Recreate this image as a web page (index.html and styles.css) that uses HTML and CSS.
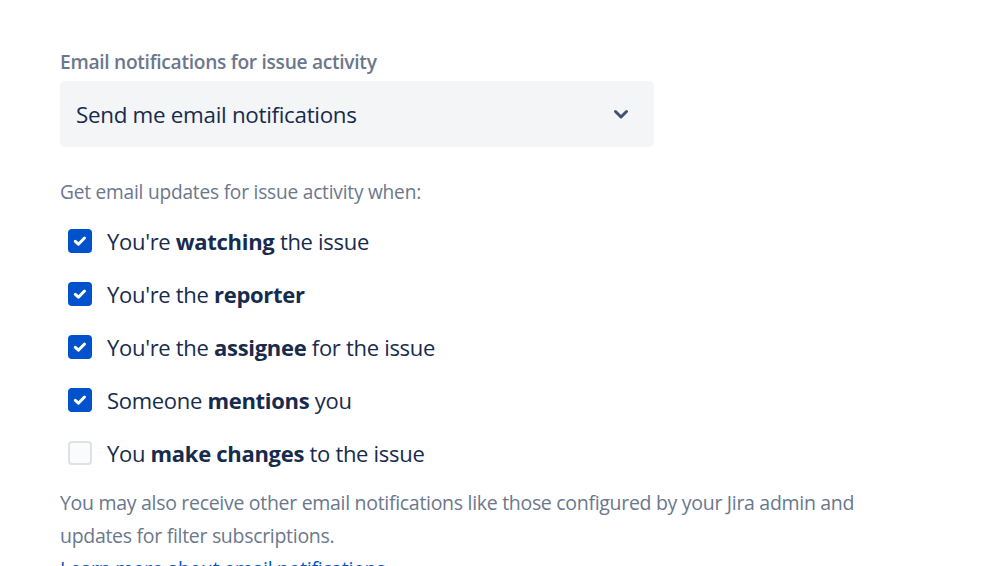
FILE: index.html
```html
<!DOCTYPE html>
<html>
<head>
<meta charset="utf-8">
<link rel="stylesheet" href="styles.css">
</head>
<body>
<div class="page">
  <p class="intro">Manage your notifications on this page by using the settings and toggles below. Change settings</p>
  <div class="field">
    <label class="label">Email notifications for issue activity</label>
    <div class="select">
      <span class="select-value">Send me email notifications</span>
      <svg class="chevron" width="24" height="24" viewBox="0 0 24 24"><path d="M6.5 9.5l5.5 5.5 5.5-5.5" fill="none" stroke="#42526E" stroke-width="3" stroke-linecap="round" stroke-linejoin="round"/></svg>
    </div>
  </div>
  <p class="hint">Get email updates for issue activity when:</p>
  <ul class="options">
    <li class="option"><span class="box checked"><svg width="24" height="24" viewBox="0 0 24 24"><path d="M7.3 12.3l3.1 2.9 6.1-6.2" fill="none" stroke="#fff" stroke-width="3" stroke-linecap="round" stroke-linejoin="round"/></svg></span><span>You're <b>watching</b> the issue</span></li>
    <li class="option"><span class="box checked"><svg width="24" height="24" viewBox="0 0 24 24"><path d="M7.3 12.3l3.1 2.9 6.1-6.2" fill="none" stroke="#fff" stroke-width="3" stroke-linecap="round" stroke-linejoin="round"/></svg></span><span>You're the <b>reporter</b></span></li>
    <li class="option"><span class="box checked"><svg width="24" height="24" viewBox="0 0 24 24"><path d="M7.3 12.3l3.1 2.9 6.1-6.2" fill="none" stroke="#fff" stroke-width="3" stroke-linecap="round" stroke-linejoin="round"/></svg></span><span>You're the <b>assignee</b> for the issue</span></li>
    <li class="option"><span class="box checked"><svg width="24" height="24" viewBox="0 0 24 24"><path d="M7.3 12.3l3.1 2.9 6.1-6.2" fill="none" stroke="#fff" stroke-width="3" stroke-linecap="round" stroke-linejoin="round"/></svg></span><span>Someone <b>mentions</b> you</span></li>
    <li class="option"><span class="box"></span><span>You <b>make changes</b> to the issue</span></li>
  </ul>
  <p class="note">You may also receive other email notifications like those configured by your Jira admin and updates for filter subscriptions.<br><a href="#" class="link">Learn more about email notifications</a></p>
</div>
</body>
</html>
```

FILE: styles.css
```css
html, body {
  margin: 0;
  padding: 0;
  background: #fff;
  overflow: hidden;
}
body {
  font-family: "Open Sans", "Noto Sans", sans-serif;
  color: #172B4D;
}
.page {
  padding-left: 60px;
  margin-top: -23px;
}
.intro {
  margin: 0;
  font-size: 19px;
  line-height: 24px;
  color: #6B778C;
  white-space: nowrap;
}
.field {
  margin-top: 49px;
  width: 594px;
}
.label {
  display: block;
  font-size: 19.2px;
  font-weight: 600;
  color: #6B778C;
  line-height: 24px;
  letter-spacing: -0.3px;
}
.select {
  margin-top: 7px;
  height: 66px;
  background: #F4F5F7;
  border-radius: 5px;
  display: flex;
  align-items: center;
  padding: 0 21px 0 16px;
  box-sizing: border-box;
}
.select-value {
  flex: 1;
  font-size: 22.4px;
  color: #172B4D;
  letter-spacing: -0.3px;
}
.chevron {
  display: block;
}
.hint {
  margin: 32px 0 0;
  font-size: 19.1px;
  line-height: 26px;
  color: #6B778C;
  letter-spacing: -0.2px;
}
.options {
  list-style: none;
  margin: 9px 0 0;
  padding: 0 0 0 8px;
}
.option {
  display: flex;
  align-items: center;
  gap: 15px;
  height: 53px;
  font-size: 22px;
  color: #172B4D;
  letter-spacing: -0.3px;
}
.option b {
  font-weight: 700;
}
.box {
  width: 24px;
  height: 24px;
  border-radius: 4px;
  box-sizing: border-box;
  background: #FAFBFC;
  border: 2px solid #DFE1E6;
  flex: none;
  display: flex;
  align-items: center;
  justify-content: center;
}
.box.checked {
  background: #0052CC;
  border: none;
}
.box svg {
  display: block;
}
.note {
  margin: 7px 0 0;
  font-size: 19.5px;
  line-height: 33px;
  color: #6B778C;
  width: 830px;
  letter-spacing: -0.3px;
}
.link {
  color: #0052CC;
  text-decoration: none;
}
```
